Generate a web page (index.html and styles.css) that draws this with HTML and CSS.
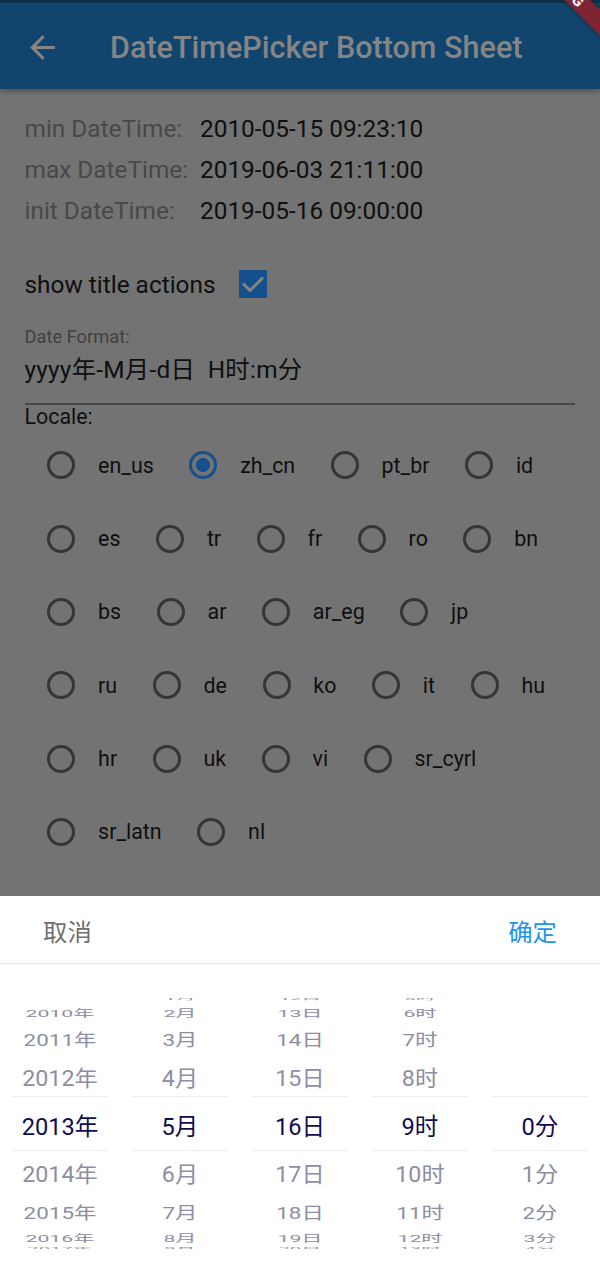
FILE: index.html
```
<!DOCTYPE html>
<html lang="zh-CN">
<head>
<meta charset="utf-8">
<title>DateTimePicker Bottom Sheet</title>
<link rel="stylesheet" href="styles.css">
</head>
<body>
<div class="screen">
  <header class="appbar">
    <svg class="back" viewBox="0 0 24 24"><path d="M20 11H7.83l5.59-5.59L12 4l-8 8 8 8 1.41-1.41L7.83 13H20v-2z"/></svg>
    <h1 class="title">DateTimePicker Bottom Sheet</h1>
  </header>
  <svg class="banner" viewBox="0 0 60 50">
    <g transform="translate(38.5 1.2) rotate(45)">
      <rect class="band" x="-70" y="-9.2" width="150" height="18.4"/>
      <text class="band-text" x="4.2" y="5.4" text-anchor="end">DEBUG</text>
    </g>
  </svg>

  <main class="content">
    <div class="info"><span class="label">min DateTime:</span><span>2010-05-15 09:23:10</span></div>
    <div class="info"><span class="label">max DateTime:</span><span>2019-06-03 21:11:00</span></div>
    <div class="info"><span class="label">init DateTime:</span><span>2019-05-16 09:00:00</span></div>
    <div class="option">
      <span>show title actions</span>
      <svg class="check" viewBox="0 0 28 28"><rect width="28" height="28" rx="1"/><path d="M4 13.5l7 7L24 7.5"/></svg>
    </div>
    <div class="field">
      <div class="field-label">Date Format:</div>
      <div class="field-value">yyyy年-M月-d日&nbsp; H时:m分</div>
    </div>
    <div class="locale-title">Locale:</div>
    <div class="locales">
      <div class="row"><label class="radio"><i class="ring"></i>en_us</label><label class="radio"><i class="ring on"></i>zh_cn</label><label class="radio"><i class="ring"></i>pt_br</label><label class="radio"><i class="ring"></i>id</label></div>
      <div class="row"><label class="radio"><i class="ring"></i>es</label><label class="radio"><i class="ring"></i>tr</label><label class="radio"><i class="ring"></i>fr</label><label class="radio"><i class="ring"></i>ro</label><label class="radio"><i class="ring"></i>bn</label></div>
      <div class="row"><label class="radio"><i class="ring"></i>bs</label><label class="radio"><i class="ring"></i>ar</label><label class="radio"><i class="ring"></i>ar_eg</label><label class="radio"><i class="ring"></i>jp</label></div>
      <div class="row"><label class="radio"><i class="ring"></i>ru</label><label class="radio"><i class="ring"></i>de</label><label class="radio"><i class="ring"></i>ko</label><label class="radio"><i class="ring"></i>it</label><label class="radio"><i class="ring"></i>hu</label></div>
      <div class="row"><label class="radio"><i class="ring"></i>hr</label><label class="radio"><i class="ring"></i>uk</label><label class="radio"><i class="ring"></i>vi</label><label class="radio"><i class="ring"></i>sr_cyrl</label></div>
      <div class="row"><label class="radio"><i class="ring"></i>sr_latn</label><label class="radio"><i class="ring"></i>nl</label></div>
    </div>
  </main>

  <section class="sheet">
    <div class="actions"><span class="cancel">取消</span><span class="confirm">确定</span></div>
    <div class="picker">
      <div class="wheel"><span class="u4"></span><span class="u3">2010年</span><span class="u2">2011年</span><span class="u1">2012年</span><span class="now">2013年</span><span class="d1">2014年</span><span class="d2">2015年</span><span class="d3">2016年</span><span class="d4">2017年</span></div>
      <div class="wheel"><span class="u4">1月</span><span class="u3">2月</span><span class="u2">3月</span><span class="u1">4月</span><span class="now">5月</span><span class="d1">6月</span><span class="d2">7月</span><span class="d3">8月</span><span class="d4">9月</span></div>
      <div class="wheel"><span class="u4">12日</span><span class="u3">13日</span><span class="u2">14日</span><span class="u1">15日</span><span class="now">16日</span><span class="d1">17日</span><span class="d2">18日</span><span class="d3">19日</span><span class="d4">20日</span></div>
      <div class="wheel"><span class="u4">5时</span><span class="u3">6时</span><span class="u2">7时</span><span class="u1">8时</span><span class="now">9时</span><span class="d1">10时</span><span class="d2">11时</span><span class="d3">12时</span><span class="d4">13时</span></div>
      <div class="wheel"><span class="u4"></span><span class="u3"></span><span class="u2"></span><span class="u1"></span><span class="now">0分</span><span class="d1">1分</span><span class="d2">2分</span><span class="d3">3分</span><span class="d4">4分</span></div>
    </div>
  </section>
</div>
</body>
</html>
```
FILE: styles.css
```
* { box-sizing: border-box; }
body { margin: 0; }

.screen {
  position: relative;
  width: 600px;
  height: 1284px;
  overflow: hidden;
  display: flex;
  flex-direction: column;
  background: #737373;
  color: #0f0f0f;
  font-family: Roboto, "Noto Sans CJK SC", sans-serif;
}

.appbar {
  flex: none;
  display: flex;
  align-items: center;
  height: 89px;
  padding: 3px 0 0 24px;
  border-top: 3px solid #0d314c;
  background: #11456d;
  box-shadow: 0 2px 6px rgba(0, 0, 0, 0.35);
}
.back { width: 37px; height: 37px; fill: #858585; }
.title {
  margin: 0 0 0 49px;
  font-size: 30.55px;
  line-height: 40px;
  font-weight: 500;
  color: #858585;
  white-space: nowrap;
}
.banner { position: absolute; top: 0; right: 0; width: 60px; height: 50px; overflow: hidden; }
.band { fill: #7e2431; filter: drop-shadow(0 0 2px rgba(0, 0, 0, 0.5)); }
.band-text { fill: #ededed; font-size: 15px; font-weight: 900; }

.content {
  flex: none;
  height: 807px;
  padding: 18.5px 25px 0 24.5px;
  font-size: 24.4px;
}
.info { display: flex; height: 41.4px; line-height: 41.4px; white-space: pre; }
.label { width: 175.5px; color: #484848; }
.option { display: flex; align-items: center; gap: 23.5px; height: 73px; margin-top: 16px; }
.check { width: 28px; height: 28px; fill: #15508c; }
.check path { fill: none; stroke: #858585; stroke-width: 3; }
.field { height: 84px; border-bottom: 2px solid #484848; }
.field-label { padding-top: 4px; font-size: 18.3px; line-height: 24px; color: #414141; }
.field-value { font-size: 24.4px; line-height: 42px; letter-spacing: 0.25px; white-space: nowrap; }
.locale-title { font-size: 21.4px; line-height: 24px; }

.locales { font-size: 21.4px; }
.row { display: flex; gap: 12.8px; height: 73.3px; }
.radio { display: flex; align-items: center; white-space: nowrap; }
.ring {
  flex: none;
  width: 28px;
  height: 28px;
  margin: 0 22.8px;
  border: 3px solid #353535;
  border-radius: 50%;
}
.ring.on {
  border-color: #15508c;
  background: radial-gradient(circle, #15508c 6.6px, transparent 7.3px);
}

.sheet { flex: none; height: 388px; background: #fff; }
.actions {
  display: flex;
  justify-content: space-between;
  align-items: center;
  height: 68px;
  padding: 2px 43px 0;
  border-bottom: 1px solid #e2e2e2;
  font-size: 24.4px;
}
.cancel { color: #707070; }
.confirm { color: #1f93ea; }

.picker { display: flex; justify-content: space-between; padding: 34px 12px 0; }
.wheel {
  display: grid;
  grid-template-rows: 5px 18px 35px 40px 55px 45px 33px 16px 4px;
  width: 96px;
  height: 251px;
  overflow: hidden;
  font-size: 23.6px;
  color: #8d8da3;
}
.wheel span {
  display: flex;
  align-items: center;
  justify-content: center;
  min-height: 0;
  line-height: 0;
  white-space: nowrap;
}
.wheel .now {
  color: #100c50;
  border: solid #ededed;
  border-width: 1px 0;
  padding-top: 6px;
}
.wheel .u4 { transform: translateY(-1.7px) scale(0.84, 0.14); }
.wheel .u3 { transform: translateY(1.2px) scale(0.9, 0.42); }
.wheel .u2 { transform: translateY(1px) scale(0.95, 0.72); }
.wheel .u1 { transform: translateY(2.7px) scale(0.985, 0.92); }
.wheel .d1 { transform: translateY(0.5px) scale(0.985, 0.92); }
.wheel .d2 { transform: translateY(0.5px) scale(0.95, 0.72); }
.wheel .d3 { transform: translateY(1.2px) scale(0.9, 0.42); }
.wheel .d4 { transform: translateY(1.8px) scale(0.84, 0.14); }
```
